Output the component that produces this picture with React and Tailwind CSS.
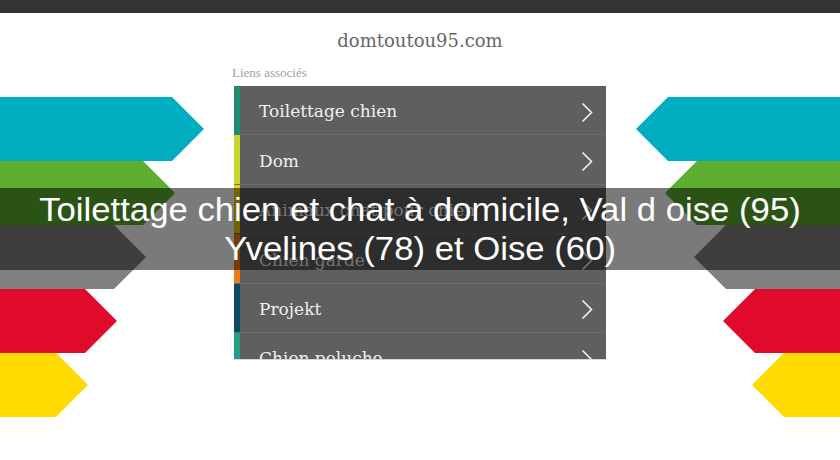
import React from "react";

const rows = [
  { label: "Toilettage chien", color: "bg-[#1e8b6e]" },
  { label: "Dom", color: "bg-[#c8d630]" },
  { label: "Animaux chat pour chien", color: "bg-[#f0d000]" },
  { label: "Chien garde", color: "bg-[#f07d12]" },
  { label: "Projekt", color: "bg-[#0b4a63]" },
  { label: "Chien peluche", color: "bg-[#269e85]" },
];

const arrows = [
  { top: 44, tip: 204, fill: "#00adc1" },
  { top: 108, tip: 175, fill: "#5dae2f" },
  { top: 172, tip: 146, fill: "#808080" },
  { top: 236, tip: 117, fill: "#e00a2a" },
  { top: 300, tip: 88, fill: "#ffda00" },
];

function Arrows({ mirror }) {
  return (
    <svg width="234" height="380" viewBox="0 0 234 380" className="shrink-0 block">
      <g transform={mirror ? "translate(234,0) scale(-1,1)" : undefined}>
        {arrows.map((a, i) => {
          const e = a.tip - 32;
          const pts = `0,${a.top} ${e},${a.top} ${a.tip},${a.top + 32} ${e},${a.top + 64} 0,${a.top + 64}`;
          return <polygon key={i} points={pts} fill={a.fill} />;
        })}
      </g>
    </svg>
  );
}

function Chevron() {
  return (
    <svg width="12" height="21" viewBox="0 0 12 21" className="block">
      <path d="M1.5 1.5 L10.5 10.5 L1.5 19.5" fill="none" stroke="#f2f2f2" strokeWidth="1.6" />
    </svg>
  );
}

export default function App() {
  return (
    <div className="relative w-[840px] h-[460px] bg-white overflow-hidden">
      <div className="h-[13px] bg-[#333333]" />
      <div className="pt-[16px] h-[40px] text-center text-[18px] leading-[24px] text-[#666666] font-['DejaVu_Serif',serif]">
        domtoutou95.com
      </div>
      <div className="flex">
        <Arrows />
        <div className="w-[372px] shrink-0">
          <div className="mt-[12px] h-[16px] leading-[16px] text-[13px] text-[#a0a0a0] font-['Liberation_Serif',serif] -ml-[2px]">
            Liens associés
          </div>
          <div className="mt-[5px] h-[274px] overflow-hidden bg-[#5f5f5f] border-b border-[#d8d8d8]">
            {rows.map((r) => (
              <div key={r.label} className="flex h-[49.4px] border-b border-[#6b6b6b]">
                <div className={`w-[6px] shrink-0 ${r.color}`} />
                <div className="flex-1 flex items-center justify-between pl-[19px] pr-[13px] pt-[4px]">
                  <span className="text-[17px] text-[#f0f0f0] font-['DejaVu_Serif',serif]">{r.label}</span>
                  <Chevron />
                </div>
              </div>
            ))}
          </div>
        </div>
        <Arrows mirror />
      </div>
      <div className="absolute left-0 right-0 top-[188px] h-[82px] bg-black/[0.52] flex flex-col items-center justify-center text-white text-[33px] leading-[39px] font-['Liberation_Sans',Arial,sans-serif]">
        <div className="scale-x-[1.052]">Toilettage chien et chat à domicile, Val d oise (95)</div>
        <div className="scale-x-[1.052]">Yvelines (78) et Oise (60)</div>
      </div>
    </div>
  );
}
